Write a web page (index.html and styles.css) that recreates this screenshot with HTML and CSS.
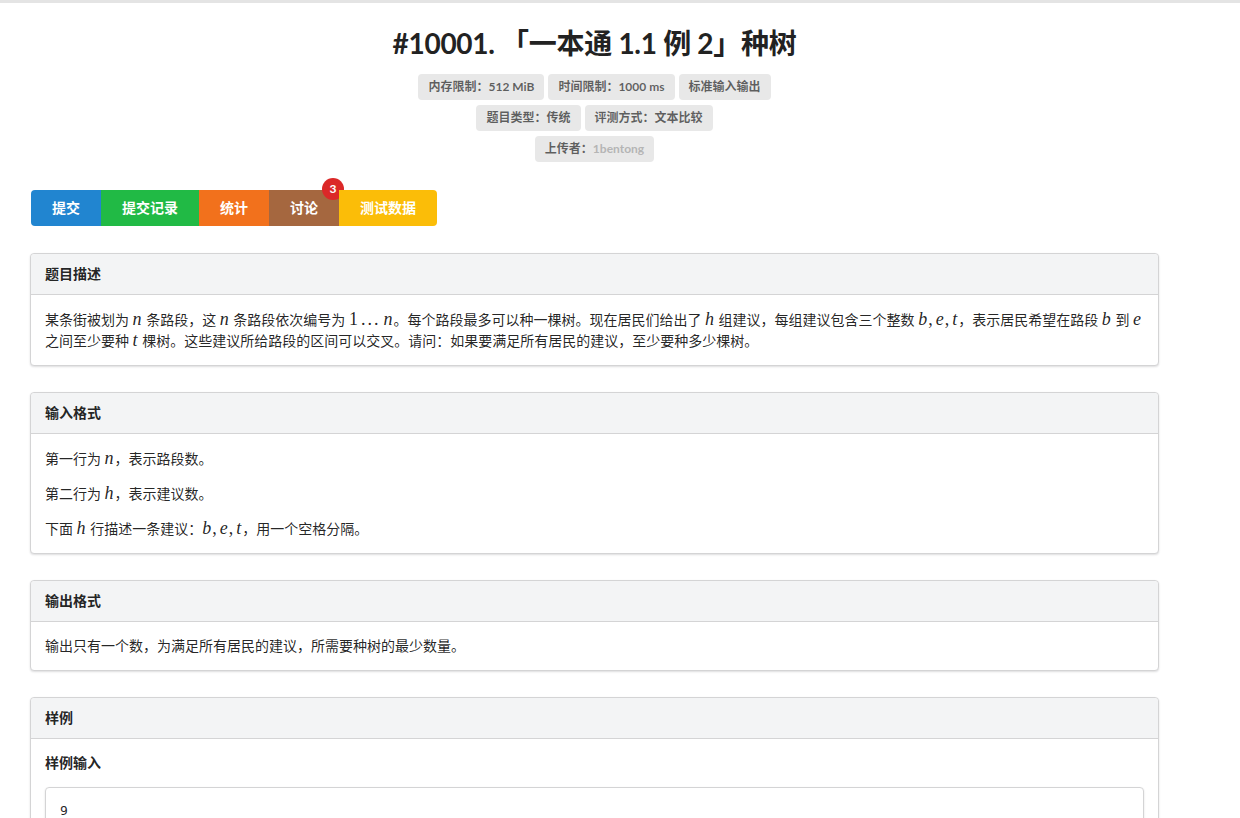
FILE: index.html
```html
<!DOCTYPE html>
<html lang="zh-CN">
<head>
<meta charset="utf-8">
<title>#10001. 「一本通 1.1 例 2」种树</title>
<link rel="stylesheet" href="styles.css">
</head>
<body>
<div class="topbar"></div>
<main class="container">
  <h1 class="title">#10001. 「一本通 1.1 例 2」种树</h1>
  <div class="labels">
    <div class="label-row">
      <span class="label">内存限制：512 MiB</span>
      <span class="label">时间限制：1000 ms</span>
      <span class="label">标准输入输出</span>
    </div>
    <div class="label-row">
      <span class="label">题目类型：传统</span>
      <span class="label">评测方式：文本比较</span>
    </div>
    <div class="label-row">
      <span class="label">上传者：<span class="muted">1bentong</span></span>
    </div>
  </div>

  <div class="btn-group">
    <a class="btn blue">提交</a>
    <a class="btn green">提交记录</a>
    <a class="btn orange">统计</a>
    <a class="btn brown">讨论<span class="badge">3</span></a>
    <a class="btn yellow">测试数据</a>
  </div>

  <section class="segment">
    <h4 class="seg-head">题目描述</h4>
    <div class="seg-body">
      <p class="math">某条街被划为 <i class="m">n</i> 条路段，这 <i class="m">n</i> 条路段依次编号为 <span class="mr">1</span><span class="mr dots">...</span><i class="m">n</i>。每个路段最多可以种一棵树。现在居民们给出了 <i class="m">h</i> 组建议，每组建议包含三个整数 <i class="m">b</i><span class="mr comma">,</span><i class="m">e</i><span class="mr comma">,</span><i class="m">t</i>，表示居民希望在路段 <i class="m">b</i> 到 <i class="m">e</i> 之间至少要种 <i class="m">t</i> 棵树。这些建议所给路段的区间可以交叉。请问：如果要满足所有居民的建议，至少要种多少棵树。</p>
    </div>
  </section>

  <section class="segment">
    <h4 class="seg-head">输入格式</h4>
    <div class="seg-body">
      <p class="math">第一行为 <i class="m">n</i>，表示路段数。</p>
      <p class="math">第二行为 <i class="m">h</i>，表示建议数。</p>
      <p class="math">下面 <i class="m">h</i> 行描述一条建议：<i class="m">b</i><span class="mr comma">,</span><i class="m">e</i><span class="mr comma">,</span><i class="m">t</i>，用一个空格分隔。</p>
    </div>
  </section>

  <section class="segment">
    <h4 class="seg-head">输出格式</h4>
    <div class="seg-body">
      <p>输出只有一个数，为满足所有居民的建议，所需要种树的最少数量。</p>
    </div>
  </section>

  <section class="segment">
    <h4 class="seg-head">样例</h4>
    <div class="seg-body">
      <h5 class="sub-head">样例输入</h5>
      <pre class="code">9
4
1 4 2
4 6 2
8 9 2</pre>
    </div>
  </section>
</main>
</body>
</html>
```

FILE: styles.css
```css
html, body {
  margin: 0;
  padding: 0;
  background: #fff;
}
body {
  font-family: Lato, "Noto Sans CJK SC", "Helvetica Neue", Arial, sans-serif;
  font-size: 14px;
  line-height: 20px;
  color: rgba(0, 0, 0, 0.87);
}
.topbar {
  height: 3px;
  background: #e4e4e4;
}
.container {
  width: 1129px;
  margin-left: 30px;
}
.title {
  margin: 22px 0 0;
  text-align: center;
  font-size: 28px;
  line-height: 36px;
  font-weight: 700;
  letter-spacing: -0.3px;
  color: #222;
}
.labels {
  margin-top: 13px;
  display: flex;
  flex-direction: column;
  align-items: center;
  gap: 5px;
}
.label-row {
  display: flex;
  gap: 4px;
  justify-content: center;
}
.label {
  display: inline-block;
  background: #e8e8e8;
  color: rgba(0, 0, 0, 0.6);
  font-size: 12px;
  line-height: 12px;
  font-weight: 700;
  padding: 7px 10px;
  border-radius: 4px;
}
.label .muted {
  color: #b5b5b5;
}
.btn-group {
  margin-top: 28px;
  margin-left: 1px;
  display: inline-flex;
  border-radius: 4px;
}
.btn {
  position: relative;
  display: inline-block;
  color: #fff;
  font-weight: 700;
  font-size: 14px;
  line-height: 14px;
  padding: 11px 21px;
  cursor: pointer;
}
.btn:first-child { border-radius: 4px 0 0 4px; }
.btn:last-child { border-radius: 0 4px 4px 0; }
.blue { background: #2185d0; }
.green { background: #21ba45; }
.orange { background: #f2711c; }
.brown { background: #a5673f; }
.yellow { background: #fbbd08; }
.badge {
  position: absolute;
  top: -12px;
  right: -5px;
  width: 22px;
  height: 22px;
  border-radius: 50%;
  background: #db2828;
  color: #fff;
  font-size: 12px;
  line-height: 22px;
  text-align: center;
  font-weight: 700;
  font-family: Lato, Arial, sans-serif;
}
.segment {
  margin-top: 26px;
  border: 1px solid #d4d4d5;
  border-radius: 4px;
  box-shadow: 0 1px 2px 0 rgba(34, 36, 38, 0.15);
  background: #fff;
}
.btn-group + .segment {
  margin-top: 27px;
}
.seg-head {
  margin: 0;
  background: #f3f4f5;
  border-bottom: 1px solid #d4d4d5;
  border-radius: 4px 4px 0 0;
  padding: 11px 14px;
  font-size: 14px;
  line-height: 18px;
  font-weight: 700;
  color: rgba(0, 0, 0, 0.87);
}
.seg-body {
  padding: 14px;
}
.seg-body p {
  margin: 0 0 14px;
  line-height: 20px;
}
.seg-body p.math {
  line-height: 21px;
}
.seg-body p:last-child {
  margin-bottom: 0;
}
.m {
  font-family: "Liberation Serif", "Times New Roman", serif;
  font-style: italic;
  font-size: 18px;
  line-height: 14px;
  padding-right: 1px;
}
.mr {
  font-family: "Liberation Serif", "Times New Roman", serif;
  font-size: 18px;
  line-height: 14px;
}
.mr.dots {
  margin: 0 3px;
  letter-spacing: 2px;
}
.mr.comma {
  margin-right: 3px;
}
.sub-head {
  margin: 0 0 14px;
  font-size: 14px;
  line-height: 20px;
  font-weight: 700;
}
.code {
  margin: 0;
  border: 1px solid #d4d4d5;
  border-radius: 4px;
  box-shadow: 0 1px 2px 0 rgba(34, 36, 38, 0.15);
  padding: 13px 14px;
  font-family: "DejaVu Sans Mono", "Liberation Mono", monospace;
  font-size: 13px;
  line-height: 20px;
  color: rgba(0, 0, 0, 0.87);
}
```
